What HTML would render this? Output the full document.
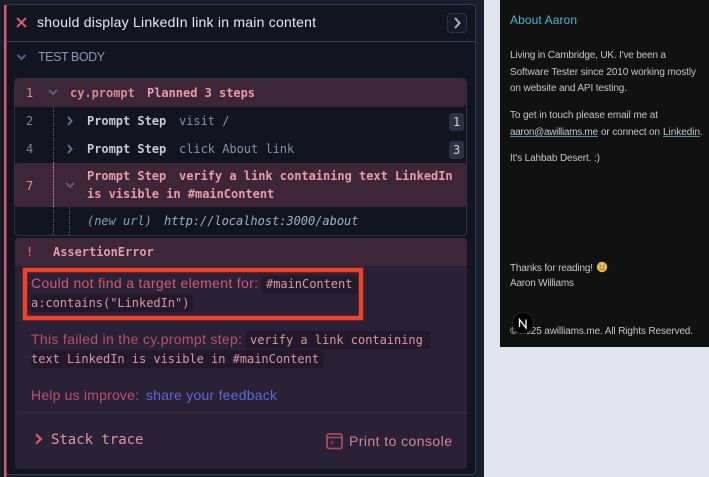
<!DOCTYPE html>
<html><head><meta charset="utf-8"><style>
html,body{margin:0;padding:0;width:709px;height:477px;overflow:hidden;background:#e1e3ed}
svg{display:block}
text{white-space:pre}
.s{font-family:"Liberation Sans",sans-serif}
.m{font-family:"DejaVu Sans Mono","Liberation Mono",monospace;font-size:12px;letter-spacing:-.024px}
.b{font-weight:bold}
.r{font-family:"Liberation Sans",sans-serif;font-size:10px;fill:#c4c6c7}
</style></head><body>
<svg width="709" height="477" viewBox="0 0 709 477" xmlns="http://www.w3.org/2000/svg">
<rect width="709" height="477" fill="#e1e3ed"/>
<rect width="484" height="477" fill="#1b1e2e"/>
<rect x="0" width="4" height="477" fill="#171a28"/>
<rect x="5.500" y="4.500" width="470" height="470" rx="4" fill="#12141f" stroke="#343950"/>
<rect x="4" y="5" width="2.500" height="472" fill="#d9596f"/>
<rect x="6" y="41" width="469" height="1" fill="#3a3f55"/>
<path d="M17 18l9 9M26 18l-9 9" stroke="#d85a6f" stroke-width="2" fill="none"/>
<text class="s" x="37" y="27" font-size="14" fill="#e8e9ef" textLength="279">should display LinkedIn link in main content</text>
<rect x="447.500" y="13.500" width="19" height="19" rx="3" fill="#171a28" stroke="#2e3244"/>
<path d="M455 18l4.500 5-4.500 5" stroke="#afb3c7" stroke-width="2" fill="none"/>
<path d="M17.500 55l4 4 4-4" stroke="#5a5f7a" stroke-width="2" fill="none"/>
<text class="s" x="38" y="61" font-size="12.500" fill="#9095ad" textLength="67">TEST BODY</text>

<rect x="14.500" y="78.500" width="452" height="157" rx="4" fill="#12141f" stroke="#2e3244"/>
<path d="M15 107V83a4 4 0 0 1 4-4H462a4 4 0 0 1 4 4V103a4 4 0 0 1-4 4Z" fill="#3c2638"/>
<text class="m" x="26" y="97" fill="#e08a9a">1</text>
<path d="M49 90l4 4 4-4" stroke="#5e6079" stroke-width="2" fill="none"/>
<text class="m b" x="70" y="97" fill="#d88a9a">cy.prompt</text>
<text class="m b" x="147" y="97" fill="#e89cab">Planned 3 steps</text>

<text class="m" x="26" y="125" fill="#7f849b">2</text>
<path d="M68 117l3.500 4-3.500 4" stroke="#696e8a" stroke-width="2" fill="none"/>
<text class="m b" x="87" y="125" fill="#c8cad8">Prompt Step</text>
<text class="m" x="179" y="125" fill="#8a8fa6">visit /</text>
<rect x="449" y="113" width="15" height="18" rx="3" fill="#2e3140"/>
<text class="m" x="453" y="126" fill="#d0d2e0">1</text>

<text class="m" x="26" y="153" fill="#7f849b">4</text>
<path d="M68 145l3.500 4-3.500 4" stroke="#696e8a" stroke-width="2" fill="none"/>
<text class="m b" x="87" y="153" fill="#c8cad8">Prompt Step</text>
<text class="m" x="179" y="153" fill="#8a8fa6">click About link</text>
<rect x="449" y="141" width="15" height="18" rx="3" fill="#2e3140"/>
<text class="m" x="453" y="154" fill="#d0d2e0">3</text>

<rect x="15" y="163" width="451" height="44" rx="3" fill="#3c2638"/>
<text class="m" x="26" y="190" fill="#e08a9a">7</text>
<path d="M66 183l4 4 4-4" stroke="#5e6079" stroke-width="2" fill="none"/>
<text class="m b" x="87" y="180" fill="#e89cab">Prompt Step</text>
<text class="m b" x="179" y="180" fill="#e89cab">verify a link containing text LinkedIn</text>
<text class="m b" x="87" y="198" fill="#e89cab">is visible in #mainContent</text>
<path d="M53.500 107V235" stroke="#4a4e66" stroke-dasharray="2 1" fill="none"/>
<path d="M53.500 163V207" stroke="#b56a7e" stroke-dasharray="2 1" fill="none"/>
<path d="M69.500 207V235" stroke="#4a4e66" stroke-dasharray="2 1" fill="none"/>
<text class="m" x="87" y="225" fill="#8e9cb4" font-style="italic">(new url)</text>
<text class="m" x="164" y="225" fill="#a8acc0" font-style="italic">http://localhost:3000/about</text>

<rect x="15" y="238" width="452" height="231" rx="4" fill="#2a2136"/>
<path d="M15 266V242a4 4 0 0 1 4-4H463a4 4 0 0 1 4 4V266Z" fill="#3c2638"/>
<text class="m b" x="26" y="256" fill="#d85a6f">!</text>
<text class="m b" x="53" y="256" fill="#e09aa9">AssertionError</text>

<rect x="25" y="270" width="336" height="48" fill="#2a2136" stroke="#ef4123" stroke-width="4.500"/>
<text class="s" x="31" y="288" font-size="14" fill="#cf5a72" textLength="227">Could not find a target element for:</text>
<rect x="261" y="276" width="97" height="18" rx="3" fill="#221a2c"/>
<text class="m" x="266" y="288" fill="#dc94a4">#mainContent</text>
<rect x="31" y="294" width="162" height="18" rx="3" fill="#221a2c"/>
<text class="m" x="31" y="307" fill="#dc94a4">a:contains("LinkedIn")</text>

<text class="s" x="31" y="344" font-size="14" fill="#b85068" textLength="211">This failed in the cy.prompt step:</text>
<rect x="245" y="331" width="186" height="18" rx="3" fill="#221a2c"/>
<text class="m" x="250" y="344" fill="#dc94a4">verify a link containing</text>
<rect x="31" y="350" width="293" height="18" rx="3" fill="#221a2c"/>
<text class="m" x="31" y="363" fill="#dc94a4">text LinkedIn is visible in #mainContent</text>

<text class="s" x="31" y="400" font-size="14" fill="#b85068" textLength="108">Help us improve:</text>
<text class="s" x="146" y="400" font-size="14" fill="#5a6ad4" textLength="131">share your feedback</text>
<rect x="17" y="412" width="450" height="1" fill="#372c42"/>
<path d="M36 434.500l5 4.500-5 4.500" stroke="#d85a6f" stroke-width="2.200" fill="none"/>
<text class="m" x="51" y="444" style="font-size:14px;letter-spacing:-.03px" fill="#dc94a4">Stack trace</text>
<rect x="327" y="434" width="15" height="14.500" rx="2" fill="none" stroke="#a34c60" stroke-width="1.800"/>
<path d="M327 437.500h15" stroke="#a34c60" stroke-width="1.500"/>
<path d="M331 441l2 1.500-2 1.500" stroke="#a34c60" fill="none"/>
<text class="s" x="349" y="446" font-size="14" fill="#d08496" textLength="103">Print to console</text>

<rect x="500" y="0" width="209" height="347" fill="#111"/>
<text class="s" x="510" y="24" font-size="12" fill="#4bb4d0" textLength="67">About Aaron</text>
<text class="r" x="510" y="58" textLength="156">Living in Cambridge, UK. I've been a</text>
<text class="r" x="510" y="75" textLength="186">Software Tester since 2010 working mostly</text>
<text class="r" x="510" y="91" textLength="117">on website and API testing.</text>
<text class="r" x="510" y="118" textLength="148">To get in touch please email me at</text>
<text class="r" x="510" y="135" textLength="88">aaron@awilliams.me</text>
<rect x="510" y="136" width="88" height="1" fill="#3f8fa3"/>
<text class="r" x="601" y="135" textLength="59">or connect on</text>
<text class="r" x="663" y="135" textLength="37">Linkedin</text>
<rect x="663" y="136" width="37" height="1" fill="#3f8fa3"/>
<text class="r" x="700" y="135">.</text>
<text class="r" x="510" y="161" textLength="90">It's Lahbab Desert. :)</text>
<text class="r" x="510" y="271" textLength="83">Thanks for reading!</text>
<circle cx="602" cy="267" r="5.200" fill="#e8bc52"/>
<circle cx="600.300" cy="266" r=".6" fill="#5a4010"/>
<circle cx="603.700" cy="266" r=".6" fill="#5a4010"/>
<path d="M599.500 268.500q2.500 2 5 0" stroke="#5a4010" stroke-width=".6" fill="none"/>
<text class="r" x="510" y="286" textLength="64">Aaron Williams</text>
<text class="r" x="510" y="334" textLength="183">© 2025 awilliams.me. All Rights Reserved.</text>
<circle cx="523" cy="323" r="10.500" fill="#000" stroke="#222"/>
<path d="M519.500 327v-7.500l6.500 8.500v-8.500" stroke="#fff" stroke-width="1.300" fill="none"/>
</svg>
</body></html>
